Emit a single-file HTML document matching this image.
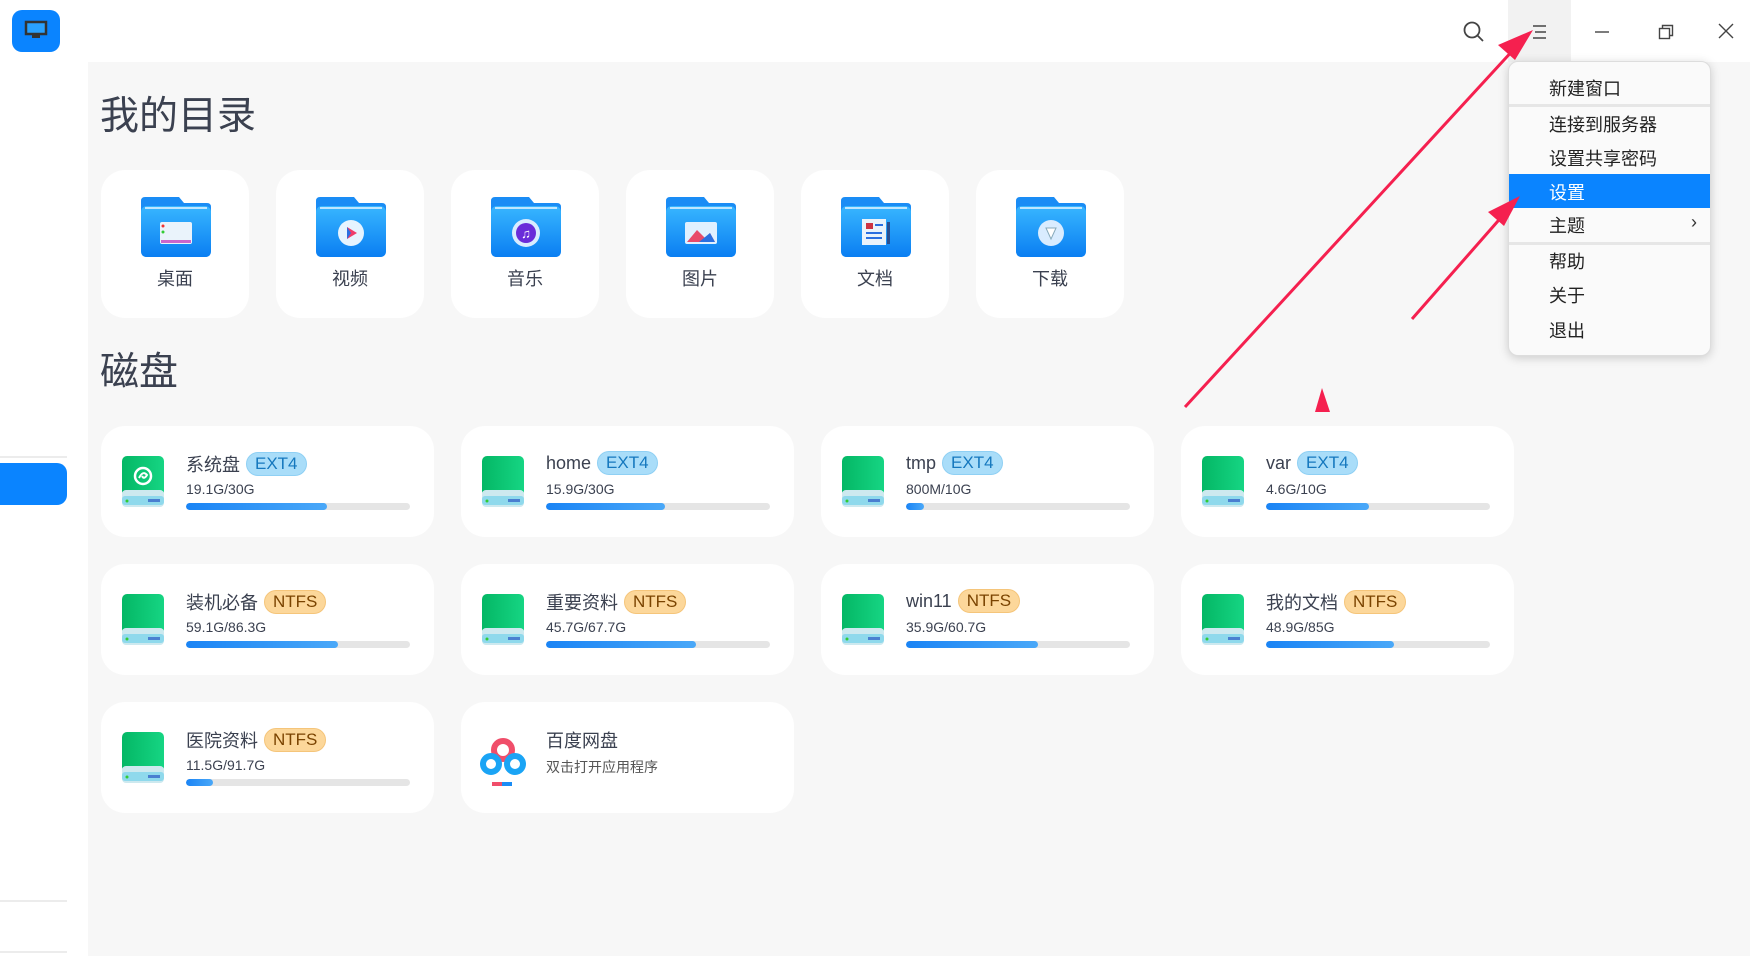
<!DOCTYPE html>
<html><head><meta charset="utf-8"><style>
*{margin:0;padding:0;box-sizing:border-box}
body{width:1750px;height:956px;overflow:hidden;background:#f7f7f7;font-family:"Liberation Sans","Noto Sans CJK SC",sans-serif;color:#3b4150;position:relative}
.top{position:absolute;left:0;top:0;width:1750px;height:62px;background:#fff}
.side{position:absolute;left:0;top:62px;width:88px;height:894px;background:#fff}
.abs{position:absolute}
h1{position:absolute;font-weight:normal;font-size:39px;color:#3b4150;left:100px}
.fc{position:absolute;top:170px;width:148px;height:148px;background:#fff;border-radius:24px}
.fc .lbl{position:absolute;width:100%;text-align:center;font-size:18px;top:95px;color:#3b4150}
.fold{position:absolute;left:40px;top:27px;width:70px;height:60px}
.dc{position:absolute;width:333px;height:111px;background:#fff;border-radius:24px}
.dc .ic{position:absolute;left:21px;top:30px;width:42px;height:51px}
.dc .nm{position:absolute;left:85px;top:25px;font-size:18px;color:#3b4150;white-space:nowrap;display:flex;align-items:center}
.bd{display:inline-block;margin-left:6px;height:24px;line-height:22px;padding:0 8px;border-radius:12px;font-size:17px}
.e{background:#a9ddf9;color:#1578be;border:1px solid #8fd0f4}
.n{background:#fcd79a;color:#7a4300;border:1px solid #f5c57a}
.dc .sz{position:absolute;left:85px;top:55px;font-size:14px;color:#3b4150}
.dc .bar{position:absolute;left:85px;top:77px;width:224px;height:7px;border-radius:4px;background:#e5e5e5;overflow:hidden}
.dc .bar i{display:block;height:100%;border-radius:4px;background:linear-gradient(90deg,#1a84f5,#4aa8f8)}
.menu{position:absolute;left:1508px;top:61px;width:203px;height:295px;background:#fafafa;border-radius:10px;box-shadow:0 2px 10px rgba(0,0,0,.18);border:1px solid #ddd;overflow:hidden}
.mi{position:absolute;left:40px;font-size:18px;color:#222}
.sep{position:absolute;left:0;width:100%;height:3px;background:#e6e6e6}
</style></head><body>
<div class="top"></div>
<div class="side"></div>
<div class="abs" style="left:12px;top:10px;width:48px;height:42px;border-radius:10px;background:#0a84ff"></div>
<svg class="abs" style="left:24px;top:20px" width="24" height="20" viewBox="0 0 24 20"><rect x="2" y="2" width="20" height="12" fill="#29a1ff" stroke="#333" stroke-width="2.5"/><rect x="8" y="15" width="8" height="3" fill="#333"/></svg>
<div class="abs" style="left:0;top:456px;width:67px;height:2px;background:#ececec"></div>
<div class="abs" style="left:0;top:463px;width:67px;height:42px;background:#0a84ff;border-radius:0 10px 10px 0"></div>
<div class="abs" style="left:0;top:900px;width:67px;height:2px;background:#ececec"></div>
<div class="abs" style="left:0;top:951px;width:67px;height:2px;background:#ececec"></div>

<svg class="abs" style="left:1462px;top:20px" width="24" height="24" viewBox="0 0 24 24"><circle cx="10" cy="10" r="7.5" fill="none" stroke="#444" stroke-width="1.8"/><line x1="15.5" y1="15.5" x2="21" y2="21" stroke="#444" stroke-width="1.8"/></svg>
<div class="abs" style="left:1508px;top:0;width:63px;height:62px;background:#f2f2f2"></div>
<svg class="abs" style="left:1532px;top:24px" width="16" height="16" viewBox="0 0 16 16"><path d="M1 2H14M3 8H14M1 14H14" stroke="#444" stroke-width="1.4"/></svg>
<svg class="abs" style="left:1594px;top:24px" width="16" height="16" viewBox="0 0 16 16"><path d="M1 8H15" stroke="#444" stroke-width="1.4"/></svg>
<svg class="abs" style="left:1658px;top:24px" width="16" height="16" viewBox="0 0 16 16"><rect x="1.5" y="4.5" width="10" height="10" fill="none" stroke="#444" stroke-width="1.4"/><path d="M4.5 4.5V1.5H14.5V11.5H11.5" fill="none" stroke="#444" stroke-width="1.4"/></svg>
<svg class="abs" style="left:1718px;top:23px" width="16" height="16" viewBox="0 0 16 16"><path d="M1 1L15 15M15 1L1 15" stroke="#444" stroke-width="1.4"/></svg>

<h1 style="top:85px">我的目录</h1>
<h1 style="top:341px">磁盘</h1>

<svg width="0" height="0" style="position:absolute"><defs>
<linearGradient id="fg" x1="0" y1="0" x2="0" y2="1"><stop offset="0" stop-color="#38b6ff"/><stop offset="1" stop-color="#0a7ef2"/></linearGradient>
<symbol id="fold" viewBox="0 0 70 60"><path d="M4 0H38L43 6H66Q70 6 70 10V54Q70 60 64 60H6Q0 60 0 54V4Q0 0 4 0Z" fill="#1a8cf5"/><rect x="0" y="9" width="70" height="51" rx="6" fill="url(#fg)"/><rect x="4" y="10" width="62" height="2" fill="#bfe6ff"/></symbol>
<linearGradient id="dg" x1="0" y1="0" x2="1" y2="0"><stop offset="0" stop-color="#04b765"/><stop offset="1" stop-color="#16d583"/></linearGradient>
<symbol id="disk" viewBox="0 0 42 51"><rect x="0" y="0" width="42" height="40" rx="5" fill="url(#dg)"/><rect x="0" y="34" width="42" height="17" rx="4" fill="#cde9ef"/><rect x="0" y="40" width="42" height="9" rx="3" fill="#8fd9ec"/><circle cx="5" cy="45" r="1.5" fill="#3c3"/><rect x="26" y="43" width="12" height="3" fill="#4a7fd0"/></symbol>
</defs></svg>

<div class="fc" style="left:101px"><svg class="fold" ><use href="#fold"/></svg><svg class="abs" style="left:59px;top:52px" width="32" height="22"><rect width="32" height="22" rx="2" fill="#eaf3fb"/><circle cx="3" cy="4" r="1.5" fill="#e33"/><circle cx="3" cy="10" r="1.5" fill="#3c3"/><rect x="1" y="18" width="30" height="3" fill="#c6c"/></svg><div class="lbl">桌面</div></div>
<div class="fc" style="left:276px"><svg class="fold"><use href="#fold"/></svg><svg class="abs" style="left:61px;top:49px" width="28" height="28"><circle cx="14" cy="14" r="13" fill="#e6f4ff"/><path d="M10 8L20 14L10 20Z" fill="#f03c6a"/><path d="M10 8V20L14 14Z" fill="#2b6fe0"/></svg><div class="lbl">视频</div></div>
<div class="fc" style="left:451px"><svg class="fold"><use href="#fold"/></svg><svg class="abs" style="left:60px;top:48px" width="30" height="30"><circle cx="15" cy="15" r="14" fill="#d9ecff"/><circle cx="15" cy="15" r="10" fill="#6a2bd9"/><text x="15" y="20" font-size="13" text-anchor="middle" fill="#fff">♫</text></svg><div class="lbl">音乐</div></div>
<div class="fc" style="left:626px"><svg class="fold"><use href="#fold"/></svg><svg class="abs" style="left:59px;top:52px" width="32" height="22"><rect width="32" height="22" rx="2" fill="#e0f0ff"/><path d="M2 20L12 8L20 16L25 11L30 20Z" fill="#e84a6a"/><path d="M14 20L25 11L30 20Z" fill="#2a6fe0"/></svg><div class="lbl">图片</div></div>
<div class="fc" style="left:801px"><svg class="fold"><use href="#fold"/></svg><svg class="abs" style="left:61px;top:49px" width="28" height="26"><rect width="24" height="26" fill="#eaf3fb"/><rect x="4" y="4" width="7" height="6" fill="#c34"/><rect x="13" y="5" width="8" height="2" fill="#2a6fe0"/><rect x="4" y="13" width="16" height="2" fill="#2a6fe0"/><rect x="4" y="18" width="16" height="2" fill="#2a6fe0"/><rect x="25" y="3" width="3" height="22" fill="#2a4f90"/></svg><div class="lbl">文档</div></div>
<div class="fc" style="left:976px"><svg class="fold"><use href="#fold"/></svg><svg class="abs" style="left:61px;top:49px" width="28" height="28"><circle cx="14" cy="14" r="13" fill="#d9ecff"/><path d="M9 9H19L14 20Z" fill="#fff" stroke="#8ab" stroke-width="1"/></svg><div class="lbl">下载</div></div>

<div class="dc" style="left:101px;top:426px"><svg class="ic"><use href="#disk"/></svg><svg class="abs" style="left:32px;top:40px" width="20" height="20"><circle cx="10" cy="10" r="8" fill="none" stroke="#fff" stroke-width="2.5"/><path d="M6 12Q10 4 14 9Q11 14 9 10" fill="none" stroke="#fff" stroke-width="2"/></svg><div class="nm">系统盘<span class="bd e">EXT4</span></div><div class="sz">19.1G/30G</div><div class="bar"><i style="width:63%"></i></div></div>
<div class="dc" style="left:461px;top:426px"><svg class="ic"><use href="#disk"/></svg><div class="nm">home<span class="bd e">EXT4</span></div><div class="sz">15.9G/30G</div><div class="bar"><i style="width:53%"></i></div></div>
<div class="dc" style="left:821px;top:426px"><svg class="ic"><use href="#disk"/></svg><div class="nm">tmp<span class="bd e">EXT4</span></div><div class="sz">800M/10G</div><div class="bar"><i style="width:8%"></i></div></div>
<div class="dc" style="left:1181px;top:426px"><svg class="ic"><use href="#disk"/></svg><div class="nm">var<span class="bd e">EXT4</span></div><div class="sz">4.6G/10G</div><div class="bar"><i style="width:46%"></i></div></div>

<div class="dc" style="left:101px;top:564px"><svg class="ic"><use href="#disk"/></svg><div class="nm">装机必备<span class="bd n">NTFS</span></div><div class="sz">59.1G/86.3G</div><div class="bar"><i style="width:68%"></i></div></div>
<div class="dc" style="left:461px;top:564px"><svg class="ic"><use href="#disk"/></svg><div class="nm">重要资料<span class="bd n">NTFS</span></div><div class="sz">45.7G/67.7G</div><div class="bar"><i style="width:67%"></i></div></div>
<div class="dc" style="left:821px;top:564px"><svg class="ic"><use href="#disk"/></svg><div class="nm">win11<span class="bd n">NTFS</span></div><div class="sz">35.9G/60.7G</div><div class="bar"><i style="width:59%"></i></div></div>
<div class="dc" style="left:1181px;top:564px"><svg class="ic"><use href="#disk"/></svg><div class="nm">我的文档<span class="bd n">NTFS</span></div><div class="sz">48.9G/85G</div><div class="bar"><i style="width:57%"></i></div></div>

<div class="dc" style="left:101px;top:702px"><svg class="ic"><use href="#disk"/></svg><div class="nm">医院资料<span class="bd n">NTFS</span></div><div class="sz">11.5G/91.7G</div><div class="bar"><i style="width:12%"></i></div></div>
<div class="dc" style="left:461px;top:702px"><svg class="abs" style="left:18px;top:34px" width="48" height="52" viewBox="0 0 48 52"><circle cx="24" cy="14" r="9" fill="none" stroke="#f04e6a" stroke-width="6"/><circle cx="12" cy="28" r="8" fill="none" stroke="#1aa4f5" stroke-width="6"/><circle cx="36" cy="28" r="8" fill="none" stroke="#1aa4f5" stroke-width="6"/><rect x="13" y="46" width="10" height="4" fill="#f04e6a"/><rect x="23" y="46" width="10" height="4" fill="#1a8cf5"/></svg><div class="nm">百度网盘</div><div class="sz" style="font-size:14px;color:#555">双击打开应用程序</div></div>

<div class="menu">
<div class="mi" style="top:13px">新建窗口</div>
<div class="sep" style="top:42px"></div>
<div class="mi" style="top:49px">连接到服务器</div>
<div class="mi" style="top:83px">设置共享密码</div>
<div class="abs" style="left:0;top:112px;width:100%;height:34px;background:#0a84ff"></div>
<div class="mi" style="top:117px;color:#fff">设置</div>
<div class="mi" style="top:150px">主题</div>
<div class="abs" style="left:182px;top:150px;font-size:18px;color:#333">›</div>
<div class="sep" style="top:180px"></div>
<div class="mi" style="top:186px">帮助</div>
<div class="mi" style="top:220px">关于</div>
<div class="mi" style="top:255px">退出</div>
</div>

<svg class="abs" style="left:0;top:0" width="1750" height="956">
<g stroke="#f5204f" stroke-width="3" fill="#f5204f">
<line x1="1185" y1="407" x2="1515" y2="48"/>
<path d="M1533 30L1498 45L1515 60Z" stroke="none"/>
<line x1="1412" y1="319" x2="1505" y2="213"/>
<path d="M1520 196L1488 212L1504 226Z" stroke="none"/>
<path d="M1322 388L1315 412H1330Z" stroke="none"/>
</g></svg>
</body></html>
